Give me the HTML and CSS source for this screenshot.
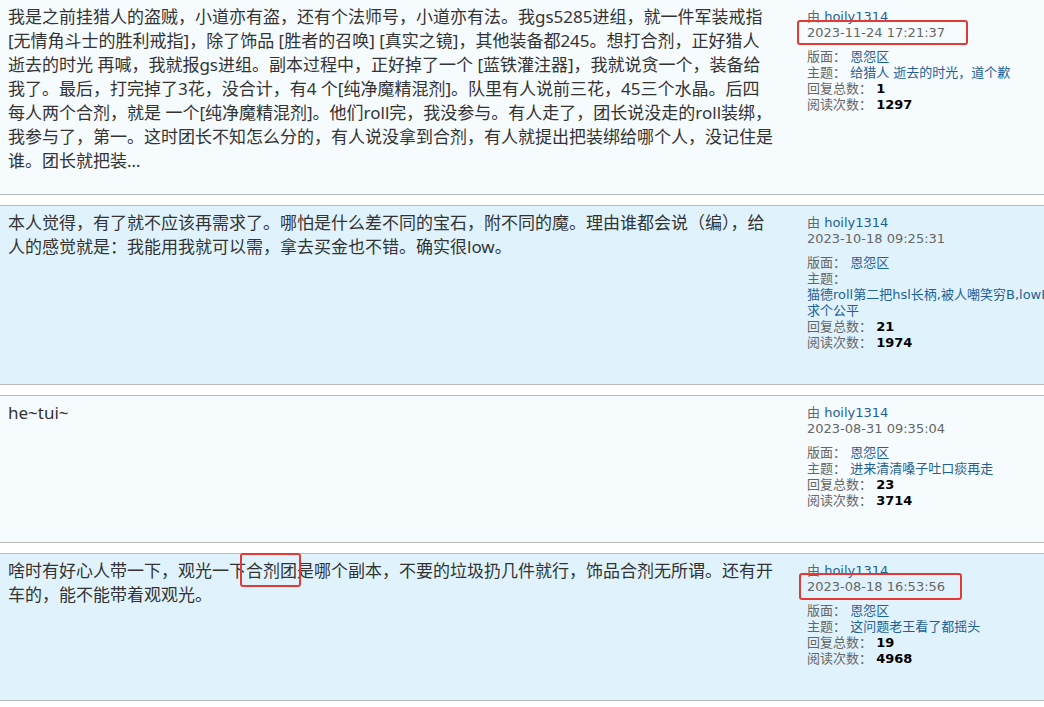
FILE: index.html
```html
<!DOCTYPE html>
<html lang="zh-CN">
<head>
<meta charset="utf-8">
<title>帖子列表</title>
<link rel="stylesheet" href="styles.css">
</head>
<body>
<div class="list">

  <div class="post light">
    <div class="body">我是之前挂猎人的盗贼，小道亦有盗，还有个法师号，小道亦有法。我gs5285进组，就一件军装戒指<br>[无情角斗士的胜利戒指]，除了饰品 [胜者的召唤] [真实之镜]，其他装备都245。想打合剂，正好猎人<br>逝去的时光 再喊，我就报gs进组。副本过程中，正好掉了一个 [蓝铁灌注器]，我就说贪一个，装备给<br>我了。最后，打完掉了3花，没合计，有4 个[纯净魔精混剂]。队里有人说前三花，45三个水晶。后四<br>每人两个合剂，就是 一个[纯净魔精混剂]。他们roll完，我没参与。有人走了，团长说没走的roll装绑，<br>我参与了，第一。这时团长不知怎么分的，有人说没拿到合剂，有人就提出把装绑给哪个人，没记住是<br>谁。团长就把装…</div>
    <div class="meta">
      <div class="line">由 <a class="link" href="#">hoily1314</a></div>
      <div class="line date"><span class="mark mark-a">2023-11-24 17:21:37</span></div>
      <div class="line"><span class="label">版面：</span> <a class="link" href="#">恩怨区</a></div>
      <div class="line"><span class="label">主题：</span> <a class="link topic" href="#">给猎人 逝去的时光，道个歉</a></div>
      <div class="line"><span class="label">回复总数：</span> <b class="num">1</b></div>
      <div class="line"><span class="label">阅读次数：</span> <b class="num">1297</b></div>
    </div>
  </div>

  <div class="post blue">
    <div class="body">本人觉得，有了就不应该再需求了。哪怕是什么差不同的宝石，附不同的魔。理由谁都会说（编），给<br>人的感觉就是：我能用我就可以需，拿去买金也不错。确实很low。</div>
    <div class="meta">
      <div class="line">由 <a class="link" href="#">hoily1314</a></div>
      <div class="line date">2023-10-18 09:25:31</div>
      <div class="line"><span class="label">版面：</span> <a class="link" href="#">恩怨区</a></div>
      <div class="line"><span class="label">主题：</span> <a class="link topic long" href="#"><span class="nowrap">猫德roll第二把hsl长柄,被人嘲笑穷B,lowB</span><br>求个公平</a></div>
      <div class="line"><span class="label">回复总数：</span> <b class="num">21</b></div>
      <div class="line"><span class="label">阅读次数：</span> <b class="num">1974</b></div>
    </div>
  </div>

  <div class="post light">
    <div class="body">he~tui~</div>
    <div class="meta">
      <div class="line">由 <a class="link" href="#">hoily1314</a></div>
      <div class="line date">2023-08-31 09:35:04</div>
      <div class="line"><span class="label">版面：</span> <a class="link" href="#">恩怨区</a></div>
      <div class="line"><span class="label">主题：</span> <a class="link topic" href="#">进来清清嗓子吐口痰再走</a></div>
      <div class="line"><span class="label">回复总数：</span> <b class="num">23</b></div>
      <div class="line"><span class="label">阅读次数：</span> <b class="num">3714</b></div>
    </div>
  </div>

  <div class="post blue">
    <div class="body">啥时有好心人带一下，观光一下<span class="mark mark-c">合剂团</span>是哪个副本，不要的垃圾扔几件就行，饰品合剂无所谓。还有开<br>车的，能不能带着观观光。</div>
    <div class="meta">
      <div class="line">由 <a class="link" href="#">hoily1314</a></div>
      <div class="line date"><span class="mark mark-b">2023-08-18 16:53:56</span></div>
      <div class="line"><span class="label">版面：</span> <a class="link" href="#">恩怨区</a></div>
      <div class="line"><span class="label">主题：</span> <a class="link topic" href="#">这问题老王看了都摇头</a></div>
      <div class="line"><span class="label">回复总数：</span> <b class="num">19</b></div>
      <div class="line"><span class="label">阅读次数：</span> <b class="num">4968</b></div>
    </div>
  </div>

</div>
</body>
</html>
```

FILE: styles.css
```css
html, body {
  margin: 0;
  padding: 0;
  background: #ffffff;
  overflow: hidden;
}

.list {
  display: flex;
  flex-direction: column;
  gap: 10px;
  width: 1080px;
}

.post {
  display: flex;
  align-items: stretch;
  border-top: 1px solid #bcbcbc;
  border-bottom: 1px solid #bcbcbc;
}

.post:first-child {
  border-top: none;
}

.post.light {
  background: #f6fbfe;
}

.post.blue {
  background: #e0f3fd;
}

.body {
  flex: 0 0 780px;
  padding: 5px 11px 21px 8px;
  font-family: "Noto Sans", "Noto Sans CJK SC", sans-serif;
  font-size: 17px;
  line-height: 24px;
  color: #333333;
  white-space: nowrap;
}

.meta {
  flex: 0 0 250px;
  padding: 9px 0 33px 8px;
  font-family: "DejaVu Sans", "Noto Sans CJK SC", sans-serif;
  font-size: 13px;
  line-height: 16px;
  color: #666666;
}

.line {
  white-space: nowrap;
}

.date {
  margin-bottom: 8px;
}

.link {
  color: #1f5f97;
  text-decoration: none;
}

.topic {
  display: inline-block;
  white-space: normal;
}

.topic.long {
  display: block;
}

.nowrap {
  white-space: nowrap;
}

.num {
  color: #000000;
  font-weight: bold;
}

.mark {
  position: relative;
}

.mark::after {
  content: "";
  position: absolute;
  border: 2px solid #e43a33;
  border-radius: 3px;
  pointer-events: none;
}

.mark-a::after {
  top: -5px;
  bottom: -5px;
  left: -10px;
  right: -23px;
}

.mark-b::after {
  top: -6px;
  bottom: -6px;
  left: -8px;
  right: -17px;
}

.mark-c::after {
  top: -6px;
  bottom: -5px;
  left: -6px;
  right: -4px;
}
```
